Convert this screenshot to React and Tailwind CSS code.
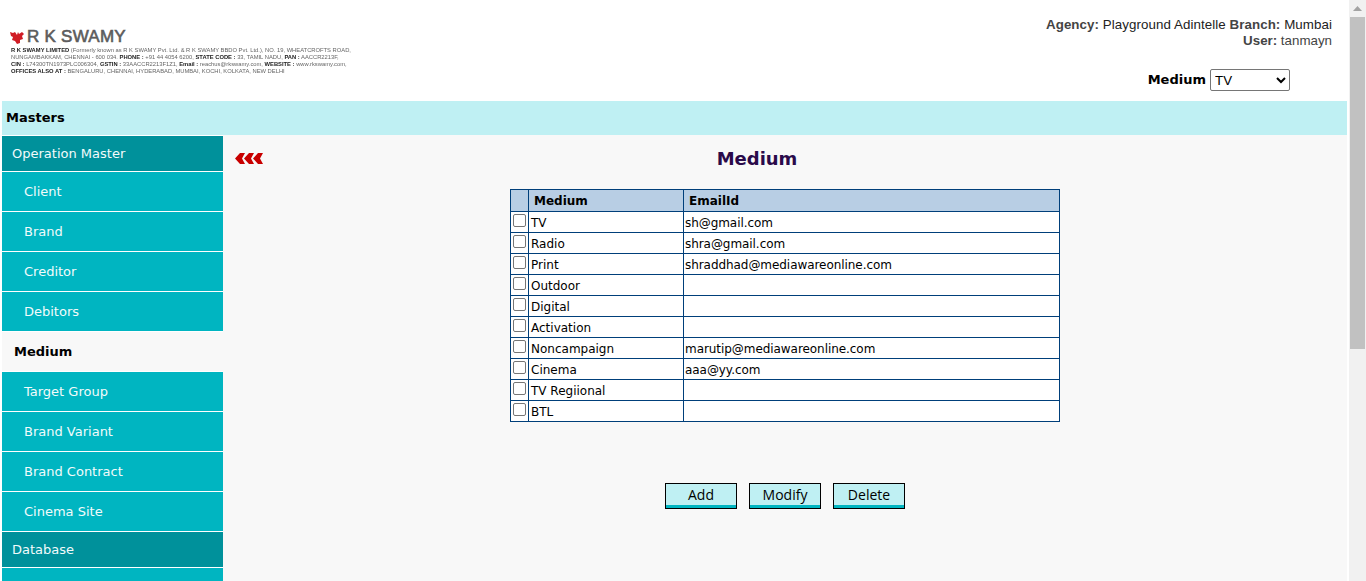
import React from "react";

const menu = [
  { label: "Operation Master", head: true },
  { label: "Client" },
  { label: "Brand" },
  { label: "Creditor" },
  { label: "Debitors" },
  { label: "Medium", active: true },
  { label: "Target Group" },
  { label: "Brand Variant" },
  { label: "Brand Contract" },
  { label: "Cinema Site" },
  { label: "Database", head: true },
  { label: "" },
];

const rows = [
  ["TV", "sh@gmail.com"],
  ["Radio", "shra@gmail.com"],
  ["Print", "shraddhad@mediawareonline.com"],
  ["Outdoor", ""],
  ["Digital", ""],
  ["Activation", ""],
  ["Noncampaign", "marutip@mediawareonline.com"],
  ["Cinema", "aaa@yy.com"],
  ["TV Regiional", ""],
  ["BTL", ""],
];

const MenuItem = ({ item }) => {
  if (item.head) {
    return (
      <div className="h-[35px] mb-px bg-[#00919b] text-[#f2fbfb] pl-[10px] pt-[10px] text-[13px] leading-[16px]">
        {item.label}
      </div>
    );
  }
  if (item.active) {
    return (
      <div className="h-[39px] mb-px bg-[#f8f8f8] text-black font-bold pl-[12px] pt-[12px] text-[13px] leading-[16px]">
        {item.label}
      </div>
    );
  }
  return (
    <div className="h-[39px] mb-px bg-[#00b5c1] text-[#f2fbfb] pl-[22px] pt-[12px] text-[13px] leading-[16px]">
      {item.label}
    </div>
  );
};

const Logo = () => (
  <div className="w-[345px] ml-[10px] pt-[28px] font-['Liberation_Sans',sans-serif]">
    <div className="flex items-center h-[18px]">
      <svg width="14" height="13" viewBox="0 0 14 13">
        <path d="M0 1 L3 2 L5 1 L7 4 L8 1 L9 3 L12 1 L14 3 L12 5 L13 8 L10 9 L10 12 L7 13 L5 10 L2 9 L3 6 L1 5 Z" fill="#d01c24" />
      </svg>
      <span className="ml-[3px] text-[17px] leading-[18px] font-medium [-webkit-text-stroke:0.6px_#5c5c5c] text-[#5c5c5c] tracking-[0.25px] whitespace-nowrap">
        R K SWAMY
      </span>
    </div>
    <div className="text-[5.8px] leading-[7.1px] text-[#666] whitespace-nowrap mt-px ml-px blur-[0.3px]">
      <div>
        <b className="text-[#222]">R K SWAMY LIMITED</b> (Formerly known as R K SWAMY Pvt. Ltd. &amp; R K SWAMY BBDO Pvt. Ltd.), NO. 19, WHEATCROFTS ROAD,
      </div>
      <div>
        NUNGAMBAKKAM, CHENNAI - 600 034. <b className="text-[#222]">PHONE :</b> +91 44 4054 6200, <b className="text-[#222]">STATE CODE :</b> 33, TAMIL NADU, <b className="text-[#222]">PAN :</b> AACCR2213F,
      </div>
      <div>
        <b className="text-[#222]">CIN :</b> L74300TN1973PLC006304, <b className="text-[#222]">GSTIN :</b> 33AACCR2213F1Z1, <b className="text-[#222]">Email :</b> reachus@rkswamy.com, <b className="text-[#222]">WEBSITE :</b> www.rkswamy.com,
      </div>
      <div>
        <b className="text-[#222]">OFFICES ALSO AT :</b> BENGALURU, CHENNAI, HYDERABAD, MUMBAI, KOCHI, KOLKATA, NEW DELHI
      </div>
    </div>
  </div>
);

const Arrows = () => (
  <svg width="28" height="11" viewBox="0 0 28 11" className="block">
    <path d="M0 5.5 L5 0 H10 L7 5.5 L10 11 H5 Z" fill="#c80000" />
    <path d="M9 5.5 L14 0 H19 L16 5.5 L19 11 H14 Z" fill="#c80000" />
    <path d="M18 5.5 L23 0 H28 L25 5.5 L28 11 H23 Z" fill="#c80000" />
  </svg>
);

const ActionButton = ({ children }) => (
  <button className="w-[72px] h-[26px] border border-black pb-[2px] bg-[#bff0f3] shadow-[inset_0_-3px_0_#00b5c1] text-[14px] leading-[20px] text-black font-['Open_Sans',sans-serif]">
    {children}
  </button>
);

const App = () => {
  return (
    <div className="h-screen w-full flex overflow-hidden bg-white font-['DejaVu_Sans',sans-serif]">
      <div className="flex-1 min-w-0 flex flex-col">
        <header className="h-[101px] shrink-0 flex justify-between">
          <Logo />
          <div className="pr-[17px] pt-[17px] text-right font-['Liberation_Sans',sans-serif] text-[13.33px] leading-[16px] text-[#222]">
            <div className="tracking-[0.07px]">
              <b className="text-[#444]">Agency:</b> Playground Adintelle <b className="text-[#444]">Branch:</b> Mumbai
            </div>
            <div className="text-[#444]">
              <b>User:</b> tanmayn
            </div>
            <div className="flex justify-end items-center mr-[42px] mt-[20px]">
              <span className="font-['DejaVu_Sans',sans-serif] font-bold text-[13px] text-black mr-[4px]">Medium</span>
              <select className="w-[80px] h-[22px] border border-[#767676] rounded-[2px] bg-white text-[13.33px] text-black font-['Liberation_Sans',sans-serif]">
                <option>TV</option>
              </select>
            </div>
          </div>
        </header>
        <div className="h-[34px] shrink-0 mx-[2px] bg-[#bff0f3] pl-[4px] pt-[9px] font-bold text-[13px] leading-[16px] text-black">
          Masters
        </div>
        <div className="flex-1 min-h-0 flex px-[2px] pt-px">
          <nav className="w-[221px] shrink-0 overflow-hidden">
            {menu.map((item, i) => (
              <MenuItem key={i} item={item} />
            ))}
          </nav>
          <main className="flex-1 min-w-0 bg-[#f8f8f8] -mt-px pt-px">
            <div className="flex items-start pt-[17px] pl-[12px] h-[53px]">
              <Arrows />
              <h1 className="flex-1 text-center pr-[96px] -mt-[5px] text-[18px] leading-[22px] font-bold text-[#2a0a4a]">
                Medium
              </h1>
            </div>
            <div className="flex justify-center">
              <table className="w-[550px] table-fixed border-collapse text-[12px] text-black bg-white">
                <colgroup>
                  <col className="w-[18px]" />
                  <col className="w-[155px]" />
                  <col />
                </colgroup>
                <thead>
                  <tr className="h-[22px] bg-[#b8cee4]">
                    <th className="border border-[#003f7a]"></th>
                    <th className="border border-[#003f7a] text-left pl-[5px] font-bold">Medium</th>
                    <th className="border border-[#003f7a] text-left pl-[5px] font-bold">EmailId</th>
                  </tr>
                </thead>
                <tbody>
                  {rows.map(([name, email]) => (
                    <tr key={name} className="h-[21px]">
                      <td className="border border-[#003f7a] p-0 align-top">
                        <span className="block w-[13px] h-[13px] mt-[2px] ml-[2px] rounded-[2px] border border-[#767676] bg-white"></span>
                      </td>
                      <td className="border border-[#003f7a] pl-[2px] py-0 leading-[18px] pt-px">{name}</td>
                      <td className="border border-[#003f7a] pl-px py-0 leading-[18px] pt-px tracking-[-0.06px]">{email}</td>
                    </tr>
                  ))}
                </tbody>
              </table>
            </div>
            <div className="flex justify-center gap-[12px] mt-[61px]">
              <ActionButton>Add</ActionButton>
              <ActionButton>Modify</ActionButton>
              <ActionButton>Delete</ActionButton>
            </div>
          </main>
        </div>
      </div>
      <div className="w-[17px] shrink-0 bg-[#f1f1f1] flex flex-col">
        <div className="h-[17px] flex items-center justify-center">
          <svg width="9" height="5" viewBox="0 0 9 5">
            <path d="M4.5 0 L9 5 H0 Z" fill="#a3a3a3" />
          </svg>
        </div>
        <div className="h-[332px] mx-px bg-[#c1c1c1]"></div>
      </div>
    </div>
  );
};

export default App;
